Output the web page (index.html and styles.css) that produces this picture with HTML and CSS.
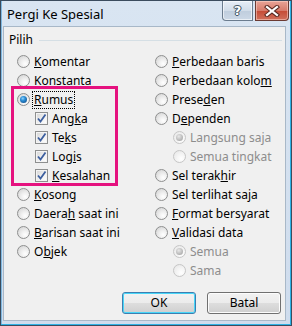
FILE: index.html
```html
<!DOCTYPE html>
<html lang="id">
<head>
<meta charset="utf-8">
<title>Pergi Ke Spesial</title>
<link rel="stylesheet" href="styles.css">
</head>
<body>
<div class="window">
  <div class="titlebar">
    <span class="title">Pergi Ke Spesial</span>
    <div class="tb-buttons">
      <div class="tb-btn help"><span>?</span></div>
      <div class="tb-btn close">
        <svg width="16" height="12" viewBox="0 0 16 12">
          <path d="M3 2 L13 10 M13 2 L3 10" stroke="#5a2a22" stroke-width="4.2" stroke-linecap="square" fill="none"/>
          <path d="M3 2 L13 10 M13 2 L3 10" stroke="#ffffff" stroke-width="2.2" stroke-linecap="square" fill="none"/>
        </svg>
      </div>
    </div>
  </div>
  <div class="client">
    <div class="group-head"><span class="group-title">Pilih</span><div class="rule"></div></div>
    <div class="cols">
      <div class="col">
        <div class="row"><span class="radio"></span><span class="label"><u>K</u>omentar</span></div>
        <div class="row"><span class="radio"></span><span class="label">Konstanta</span></div>
        <div class="highlight">
          <div class="row"><span class="radio on"></span><span class="label focus"><u>R</u>umus</span></div>
          <div class="row sub"><span class="check"><svg width="11" height="11" viewBox="0 0 11 11"><path d="M2 5.5 L4.5 8.5 L9.5 1.5" stroke="#3d5f9f" stroke-width="1.8" fill="none"/></svg></span><span class="label">Ang<u>k</u>a</span></div>
          <div class="row sub"><span class="check"><svg width="11" height="11" viewBox="0 0 11 11"><path d="M2 5.5 L4.5 8.5 L9.5 1.5" stroke="#3d5f9f" stroke-width="1.8" fill="none"/></svg></span><span class="label">Te<u>k</u>s</span></div>
          <div class="row sub"><span class="check"><svg width="11" height="11" viewBox="0 0 11 11"><path d="M2 5.5 L4.5 8.5 L9.5 1.5" stroke="#3d5f9f" stroke-width="1.8" fill="none"/></svg></span><span class="label">Log<u>i</u>s</span></div>
          <div class="row sub"><span class="check"><svg width="11" height="11" viewBox="0 0 11 11"><path d="M2 5.5 L4.5 8.5 L9.5 1.5" stroke="#3d5f9f" stroke-width="1.8" fill="none"/></svg></span><span class="label"><u>K</u>esalahan</span></div>
        </div>
        <div class="row"><span class="radio"></span><span class="label"><u>K</u>osong</span></div>
        <div class="row"><span class="radio"></span><span class="label">Daera<u>h</u> saat ini</span></div>
        <div class="row"><span class="radio"></span><span class="label"><u>B</u>arisan saat ini</span></div>
        <div class="row"><span class="radio"></span><span class="label">O<u>b</u>jek</span></div>
      </div>
      <div class="col">
        <div class="row"><span class="radio"></span><span class="label"><u>P</u>erbedaan baris</span></div>
        <div class="row"><span class="radio"></span><span class="label">Perbedaan kolo<u>m</u></span></div>
        <div class="row"><span class="radio"></span><span class="label">Prese<u>d</u>en</span></div>
        <div class="row"><span class="radio"></span><span class="label">D<u>e</u>penden</span></div>
        <div class="row sub disabled"><span class="radio on"></span><span class="label">Langsung saja</span></div>
        <div class="row sub disabled"><span class="radio"></span><span class="label">Semua tingkat</span></div>
        <div class="row"><span class="radio"></span><span class="label">Sel terak<u>h</u>ir</span></div>
        <div class="row"><span class="radio"></span><span class="label">Sel terlihat sa<u>j</u>a</span></div>
        <div class="row"><span class="radio"></span><span class="label"><u>F</u>ormat bersyarat</span></div>
        <div class="row"><span class="radio"></span><span class="label"><u>V</u>alidasi data</span></div>
        <div class="row sub disabled"><span class="radio on"></span><span class="label">Semua</span></div>
        <div class="row sub disabled"><span class="radio"></span><span class="label">Sama</span></div>
      </div>
    </div>
    <div class="actions">
      <div class="btn default">OK</div>
      <div class="btn">Batal</div>
    </div>
  </div>
</div>
</body>
</html>
```
FILE: styles.css
```css
* { box-sizing: border-box; }
html, body { margin: 0; padding: 0; }
body {
  width: 292px;
  height: 326px;
  overflow: hidden;
  font-family: "Noto Sans", "Open Sans", sans-serif;
  font-size: 12px;
  color: #000;
}
.window {
  width: 292px;
  height: 326px;
  border: 1px solid #3b4c5e;
  box-shadow: inset -1px -1px 0 #2eb2e6, inset 1px 0 0 #7fb8e0;
  background: linear-gradient(#d9e5f2, #cfdced);
  display: flex;
  flex-direction: column;
}
.titlebar {
  height: 25px;
  display: flex;
  align-items: flex-start;
  padding-left: 6px;
}
.title {
  font-size: 13px;
  line-height: 26px;
  color: #000;
}
.tb-buttons {
  margin-left: auto;
  margin-right: 2px;
  display: flex;
  gap: 2px;
}
.tb-btn {
  height: 20px;
  border: 1px solid #6b7c8e;
  border-top: none;
  display: flex;
  align-items: center;
  justify-content: center;
}
.help {
  width: 31px;
  border-radius: 0 0 0 4px;
  background: linear-gradient(#e7eef7 0%, #d2dde9 50%, #bfcddd 51%, #ccd8e6 100%);
  box-shadow: inset 0 0 0 1px rgba(255,255,255,0.6);
}
.help span {
  font-family: "DejaVu Sans", sans-serif;
  font-weight: bold;
  font-size: 13px;
  color: #fff;
  text-shadow: 0 0 1px #3a4a5a, 0 0 1px #3a4a5a, 1px 0 0 #4b5b6b, -1px 0 0 #4b5b6b, 0 1px 0 #4b5b6b, 0 -1px 0 #4b5b6b;
  line-height: 1;
}
.close {
  width: 34px;
  border-color: #6b3a32;
  border-radius: 0 0 4px 0;
  background: linear-gradient(#e8a497 0%, #d77b6b 50%, #c54a34 51%, #d0705c 100%);
  box-shadow: inset 0 0 0 1px rgba(255,220,210,0.5);
}
.client {
  flex: 1;
  margin: 0 5px 4px 2px;
  background: #f0f0f0;
  border: 1px solid #a8b8c8;
  padding: 3px 0 0 0;
  display: flex;
  flex-direction: column;
}
.group-head {
  display: flex;
  align-items: center;
  height: 19px;
  padding-left: 5px;
}
.group-title { line-height: 19px; }
.rule {
  flex: 1;
  height: 1px;
  background: #d5dfe5;
  margin: 1px 3px 0 6px;
}
.cols {
  margin-top: 3px;
  display: grid;
  grid-template-columns: 138px 1fr;
  padding-left: 13px;
}
.col { display: flex; flex-direction: column; }
.row {
  height: 19px;
  display: flex;
  align-items: center;
  gap: 4px;
}
.row.sub { padding-left: 18px; gap: 4px; }
.label { line-height: 16px; white-space: nowrap; }
.label u { text-underline-offset: 1px; }
.label.focus { outline: 1px dotted #000; outline-offset: 0; padding: 0 1px; margin-left: -1px; }
.radio {
  width: 13px;
  height: 13px;
  border-radius: 50%;
  border: 1px solid #8e8f8f;
  background: radial-gradient(circle at 65% 70%, #ffffff 0%, #f0f0f0 35%, #cfcfcf 100%);
  position: relative;
  flex: none;
}
.radio.on::after {
  content: "";
  position: absolute;
  left: 2px; top: 2px;
  width: 7px; height: 7px;
  border-radius: 50%;
  background: radial-gradient(circle at 40% 35%, #8fd3ff 0%, #2c8fd6 35%, #0b3f7a 100%);
}
.disabled .radio {
  border-color: #c6c6c6;
  background: radial-gradient(circle at 65% 70%, #ffffff 0%, #f5f5f5 40%, #e4e4e4 100%);
}
.disabled .radio.on::after {
  background: radial-gradient(circle at 40% 35%, #e8e8e8 0%, #b9b9b9 60%, #9c9c9c 100%);
}
.disabled .label { color: #8d8d8d; }
.check {
  width: 13px;
  height: 13px;
  border: 1px solid #8e8f8f;
  background: linear-gradient(135deg, #d4d4d4 0%, #f2f2f2 60%, #ffffff 100%);
  box-shadow: inset 0 0 0 1px #f4f4f4;
  display: flex;
  align-items: center;
  justify-content: center;
  flex: none;
}
.highlight { position: relative; }
.highlight::after {
  content: "";
  position: absolute;
  left: -6px;
  top: -4px;
  width: 101px;
  bottom: -1px;
  border: 3px solid #e5127f;
  pointer-events: none;
}
.actions {
  margin-top: auto;
  margin-bottom: 6px;
  display: flex;
  justify-content: flex-end;
  gap: 11px;
  padding-right: 4px;
}
.btn {
  width: 74px;
  height: 22px;
  border: 1px solid #707070;
  border-radius: 3px;
  background: linear-gradient(#f2f2f2 0%, #ebebeb 50%, #dddddd 51%, #cfcfcf 100%);
  box-shadow: inset 0 0 0 1px #fcfcfc;
  display: flex;
  align-items: center;
  justify-content: center;
  line-height: 1;
}
.btn.default {
  border-color: #3c7fb1;
  box-shadow: inset 0 0 0 1px #48d6f8;
}
```
